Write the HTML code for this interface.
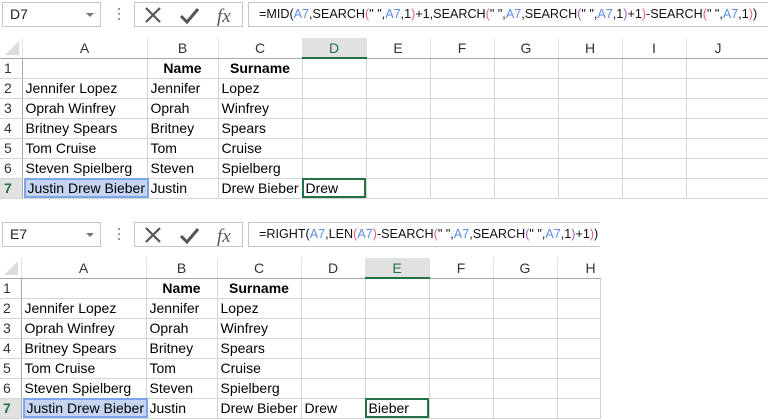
<!DOCTYPE html>
<html><head><meta charset="utf-8"><style>
*{margin:0;padding:0;box-sizing:border-box}
body{width:768px;height:420px;background:#fff;position:relative;overflow:hidden;font-family:"Liberation Sans",sans-serif;color:#000}
.p{position:absolute;left:0;height:200px}
.nb{position:absolute;left:2px;top:2px;width:99px;height:25px;border:1px solid #c6c6c6;font-size:14px;line-height:23px;padding-left:7px;color:#222}
.nb:after{content:"";position:absolute;right:6px;top:10px;border-left:4px solid transparent;border-right:4px solid transparent;border-top:4px solid #777}
.dots{position:absolute;left:118px;top:8px;width:2px;height:14px;background:repeating-linear-gradient(#999 0 2px,transparent 2px 5px)}
.ib{position:absolute;left:134px;top:2px;width:109px;height:25px;border:1px solid #c6c6c6}
.fb{position:absolute;left:248px;top:2px;height:25px;border:1px solid #c6c6c6;border-right:none;font-size:12.6px;line-height:23px;padding-left:10px;white-space:nowrap;overflow:hidden;color:#111}
.r{color:#5b8ee6}.k{color:#e8607f}.v{color:#9a5fd0}
table{position:absolute;left:0;top:38px;border-collapse:collapse;table-layout:fixed;font-size:14px}
td{height:20px;border:1px solid #d4d4d4;padding:0 3px;white-space:nowrap;overflow:visible;line-height:18px}
tr.h td{border:none;border-bottom:1px solid #a8a8a8;border-left:1px solid #e2e2e2;text-align:center;color:#333;font-size:14px}
td.c{position:relative}
td.c svg{position:absolute;left:5px;top:3px}
td.n{text-align:left;color:#333;padding-left:4px;border-left:none;border-right:1px solid #a8a8a8}
td.b{font-weight:bold;text-align:center}
.sel{background:#e1e1e1!important;color:#217346!important;border-bottom:2px solid #217346!important}
.gn{color:#217346!important;font-weight:bold;background:#e1e1e1}
.hl span{background:#c5d5f1;outline:2px solid #7ea5ea;padding:0 2px}
.act{outline:2px solid #217346;outline-offset:-2px}
</style></head><body>

<div class="p" style="top:0;width:768px">
<div class="nb">D7</div><div class="dots"></div>
<div class="ib"><svg width="109" height="25" style="position:absolute;left:0;top:0"><path d="M11 5 L25 19 M25 5 L11 19" stroke="#555" stroke-width="2.2"/><path d="M46 13 L52 19 L63 6" stroke="#555" stroke-width="3" fill="none"/><text x="82" y="19" font-family="Liberation Serif" font-style="italic" font-size="19" fill="#555">fx</text></svg></div>
<div class="fb" style="width:520px">=MID(<span class="r">A7</span>,SEARCH<span class="k">(</span>" ",<span class="r">A7</span>,1<span class="k">)</span>+1,SEARCH<span class="k">(</span>" ",<span class="r">A7</span>,SEARCH<span class="v">(</span>" ",<span class="r">A7</span>,1<span class="v">)</span>+1<span class="k">)</span>-SEARCH<span class="k">(</span>" ",<span class="r">A7</span>,1<span class="k">)</span>)</div>
<table style="width:768px">
<colgroup><col style="width:22px"><col style="width:125px"><col style="width:71px"><col style="width:84px"><col style="width:64px"><col style="width:64px"><col style="width:64px"><col style="width:64px"><col style="width:64px"><col style="width:64px"><col style="width:82px"></colgroup>
<tr class="h"><td class="c" style="border-left:none"><svg width="14" height="14"><path d="M14 0 L14 14 L0 14Z" fill="#dcdcdc"/></svg></td><td>A</td><td>B</td><td>C</td><td class="sel">D</td><td>E</td><td>F</td><td>G</td><td>H</td><td>I</td><td style="text-align:left;padding-left:28px">J</td></tr>
<tr><td class="n">1</td><td></td><td class="b">Name</td><td class="b">Surname</td><td></td><td></td><td></td><td></td><td></td><td></td><td></td></tr>
<tr><td class="n">2</td><td>Jennifer Lopez</td><td>Jennifer</td><td>Lopez</td><td></td><td></td><td></td><td></td><td></td><td></td><td></td></tr>
<tr><td class="n">3</td><td>Oprah Winfrey</td><td>Oprah</td><td>Winfrey</td><td></td><td></td><td></td><td></td><td></td><td></td><td></td></tr>
<tr><td class="n">4</td><td>Britney Spears</td><td>Britney</td><td>Spears</td><td></td><td></td><td></td><td></td><td></td><td></td><td></td></tr>
<tr><td class="n">5</td><td>Tom Cruise</td><td>Tom</td><td>Cruise</td><td></td><td></td><td></td><td></td><td></td><td></td><td></td></tr>
<tr><td class="n">6</td><td>Steven Spielberg</td><td>Steven</td><td>Spielberg</td><td></td><td></td><td></td><td></td><td></td><td></td><td></td></tr>
<tr><td class="n gn">7</td><td class="hl"><span>Justin Drew Bieber</span></td><td>Justin</td><td>Drew Bieber</td><td class="act">Drew</td><td></td><td></td><td></td><td></td><td></td><td></td></tr>
</table>
</div>

<div class="p" style="top:220px;width:600px">
<div class="nb">E7</div><div class="dots"></div>
<div class="ib"><svg width="109" height="25" style="position:absolute;left:0;top:0"><path d="M11 5 L25 19 M25 5 L11 19" stroke="#555" stroke-width="2.2"/><path d="M46 13 L52 19 L63 6" stroke="#555" stroke-width="3" fill="none"/><text x="82" y="19" font-family="Liberation Serif" font-style="italic" font-size="19" fill="#555">fx</text></svg></div>
<div class="fb" style="width:352px">=RIGHT(<span class="r">A7</span>,LEN<span class="k">(</span><span class="r">A7</span><span class="k">)</span>-SEARCH<span class="k">(</span>" ",<span class="r">A7</span>,SEARCH<span class="v">(</span>" ",<span class="r">A7</span>,1<span class="v">)</span>+1<span class="k">)</span>)</div>
<table style="width:600px;left:-1px">
<colgroup><col style="width:22px"><col style="width:125px"><col style="width:71px"><col style="width:84px"><col style="width:64px"><col style="width:64px"><col style="width:64px"><col style="width:64px"><col style="width:43px"></colgroup>
<tr class="h"><td class="c" style="border-left:none"><svg width="14" height="14"><path d="M14 0 L14 14 L0 14Z" fill="#dcdcdc"/></svg></td><td>A</td><td>B</td><td>C</td><td>D</td><td class="sel">E</td><td>F</td><td>G</td><td style="text-align:left;padding-left:28px">H</td></tr>
<tr><td class="n">1</td><td></td><td class="b">Name</td><td class="b">Surname</td><td></td><td></td><td></td><td></td><td></td></tr>
<tr><td class="n">2</td><td>Jennifer Lopez</td><td>Jennifer</td><td>Lopez</td><td></td><td></td><td></td><td></td><td></td></tr>
<tr><td class="n">3</td><td>Oprah Winfrey</td><td>Oprah</td><td>Winfrey</td><td></td><td></td><td></td><td></td><td></td></tr>
<tr><td class="n">4</td><td>Britney Spears</td><td>Britney</td><td>Spears</td><td></td><td></td><td></td><td></td><td></td></tr>
<tr><td class="n">5</td><td>Tom Cruise</td><td>Tom</td><td>Cruise</td><td></td><td></td><td></td><td></td><td></td></tr>
<tr><td class="n">6</td><td>Steven Spielberg</td><td>Steven</td><td>Spielberg</td><td></td><td></td><td></td><td></td><td></td></tr>
<tr><td class="n gn">7</td><td class="hl"><span>Justin Drew Bieber</span></td><td>Justin</td><td>Drew Bieber</td><td>Drew</td><td class="act">Bieber</td><td></td><td></td><td></td></tr>
</table>
</div>
</body></html>
